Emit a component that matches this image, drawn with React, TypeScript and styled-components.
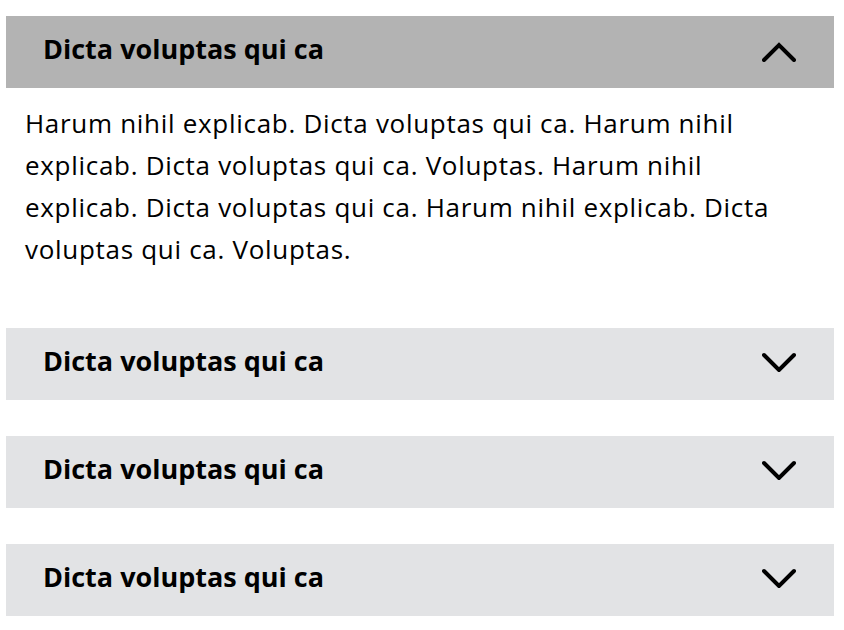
import React, { useState } from "react";
import styled, { createGlobalStyle } from "styled-components";

const Global = createGlobalStyle`
  html, body { margin: 0; padding: 0; background: #ffffff; }
  body { font-family: "Open Sans", "Noto Sans", sans-serif; color: #000; }
`;

const Wrapper = styled.div`
  padding: 16px 10px 0 6px;
  display: flex;
  flex-direction: column;
  gap: 36px;
`;

const Item = styled.section`
  display: flex;
  flex-direction: column;
`;

const Header = styled.button<{ $open: boolean }>`
  display: flex;
  align-items: center;
  justify-content: space-between;
  height: 72px;
  padding: 0 38px 0 37px;
  border: none;
  margin: 0;
  background: ${(p) => (p.$open ? "#b3b3b3" : "#e2e3e5")};
  cursor: pointer;
  text-align: left;
  font-family: "Open Sans", "Noto Sans", sans-serif;
  font-weight: 700;
  font-size: 27px;
  color: #000;
`;

const Title = styled.span`
  display: block;
  line-height: 1;
  margin-top: -8px;
`;

const Panel = styled.div`
  padding: 14px 20px 0 19px;
  font-family: "Open Sans", "Noto Sans", sans-serif;
  font-size: 26px;
  letter-spacing: 0.7px;
  line-height: 42px;
  font-weight: 400;
  height: 204px;
  box-sizing: border-box;
`;

const Icon = styled.svg<{ $up: boolean }>`
  display: block;
  margin-top: ${(p) => (p.$up ? "0px" : "-4px")};
`;

const Chevron = ({ up }: { up: boolean }) => (
  <Icon $up={up} width="34" height="20" viewBox="0 0 34 20" fill="none">
    <polyline
      points={up ? "2,18 17,3 32,18" : "2,3 17,18 32,3"}
      stroke="#000"
      strokeWidth="4"
      strokeLinecap="round"
      strokeLinejoin="miter"
    />
  </Icon>
);

const body =
  "Harum nihil explicab. Dicta voluptas qui ca. Harum nihil explicab. Dicta voluptas qui ca. Voluptas. Harum nihil explicab. Dicta voluptas qui ca. Harum nihil explicab. Dicta voluptas qui ca. Voluptas.";

export default function App() {
  const [open, setOpen] = useState(0);
  const items = [0, 1, 2, 3];
  return (
    <>
      <Global />
      <Wrapper>
        {items.map((i) => (
          <Item key={i}>
            <Header $open={open === i} onClick={() => setOpen(open === i ? -1 : i)}>
              <Title>Dicta voluptas qui ca</Title>
              <Chevron up={open === i} />
            </Header>
            {open === i && <Panel>{body}</Panel>}
          </Item>
        ))}
      </Wrapper>
    </>
  );
}
